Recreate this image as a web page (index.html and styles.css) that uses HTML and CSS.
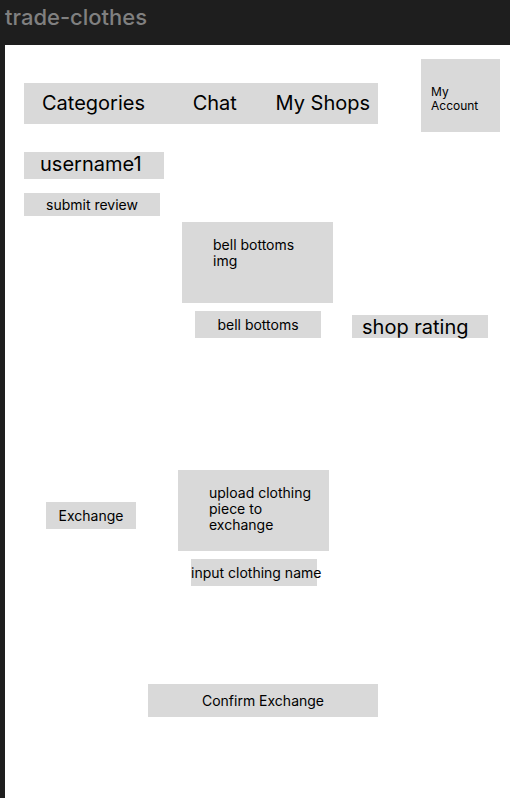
FILE: index.html
```html
<!DOCTYPE html>
<html lang="en">
<head>
<meta charset="utf-8">
<meta name="viewport" content="width=device-width, initial-scale=1">
<title>trade-clothes</title>
<link rel="stylesheet" href="styles.css">
</head>
<body>
<h1 class="title">trade-clothes</h1>
<div class="page">
  <header class="header">
    <nav class="nav">
      <a href="#">Categories</a>
      <a href="#">Chat</a>
      <a href="#">My Shops</a>
    </nav>
    <a class="account" href="#">My Account</a>
  </header>
  <main>
    <section class="seller">
      <h2 class="username">username1</h2>
      <button class="review" type="button">submit review</button>
    </section>
    <section class="listing">
      <div class="piece">
        <div class="image"><span>bell bottoms img</span></div>
        <div class="name">bell bottoms</div>
      </div>
      <div class="rating">shop rating</div>
    </section>
    <form class="trade">
      <div class="offer">
        <button class="exchange" type="button">Exchange</button>
        <div class="piece">
          <button class="image" type="button"><span>upload clothing piece to exchange</span></button>
          <div class="name"><input class="name-input" type="text" aria-label="Clothing name" placeholder="input clothing name"></div>
        </div>
      </div>
      <button class="confirm" type="submit">Confirm Exchange</button>
    </form>
  </main>
</div>
</body>
</html>
```
FILE: styles.css
```css
* {
  box-sizing: border-box;
}

body {
  min-height: 100vh;
  margin: 0;
  display: flex;
  flex-direction: column;
  background: #1e1e1e;
  color: #000;
  font: 14px/16px Inter, "Liberation Sans", sans-serif;
}

button,
input {
  margin: 0;
  padding: 0;
  border: 0;
  border-radius: 0;
  background: #d9d9d9;
  color: inherit;
  font: inherit;
}

a {
  color: inherit;
  text-decoration: none;
}

.title {
  margin: 0;
  padding: 3px 5px 14px;
  color: #808080;
  font-size: 22px;
  font-weight: 500;
  line-height: 28px;
}

.page {
  flex: 1;
  margin-left: 5px;
  padding: 14px 10px 80px 19px;
  background: #fff;
}

.header {
  display: flex;
  align-items: flex-start;
  gap: 43px;
}

.nav {
  flex: 1;
  display: grid;
  grid-template-columns: 151fr 83fr 94fr;
  margin-top: 24px;
  padding: 8px 8px 9px 18px;
  background: #d9d9d9;
  font-size: 20px;
  line-height: 24px;
  white-space: nowrap;
}

.account {
  width: 79px;
  height: 73px;
  padding: 26px 10px;
  background: #d9d9d9;
  font-size: 12px;
  line-height: 14px;
}

.seller {
  display: flex;
  flex-direction: column;
  align-items: flex-start;
  gap: 14px;
  margin-top: 20px;
}

.username {
  width: 140px;
  margin: 0;
  padding: 0 16px 3px;
  background: #d9d9d9;
  font-size: 20px;
  font-weight: 400;
  line-height: 24px;
}

.review {
  width: 136px;
  height: 23px;
}

.listing {
  display: flex;
  align-items: flex-end;
  gap: 19px;
  margin: 6px 0 0 158px;
}

.piece {
  display: flex;
  flex-direction: column;
  gap: 8px;
  width: 151px;
}

.image {
  display: flex;
  align-items: flex-start;
  height: 81px;
  padding: 15px 16px 0 31px;
  background: #d9d9d9;
  text-align: left;
}

.name {
  width: 126px;
  height: 27px;
  margin-left: 13px;
  padding: 6px 0;
  background: #d9d9d9;
  text-align: center;
}

.name-input {
  width: 132px;
  height: 16px;
  background: transparent;
}

.name-input::placeholder {
  color: inherit;
  opacity: 1;
}

.rating {
  width: 136px;
  height: 23px;
  padding-left: 10px;
  background: #d9d9d9;
  font-size: 20px;
  line-height: 24px;
}

.trade {
  margin-top: 132px;
}

.offer {
  display: flex;
  align-items: flex-start;
  gap: 42px;
  margin-left: 22px;
}

.exchange {
  width: 90px;
  height: 27px;
  margin-top: 32px;
}

.confirm {
  display: block;
  width: 230px;
  height: 33px;
  margin: 98px 0 0 124px;
}
```
